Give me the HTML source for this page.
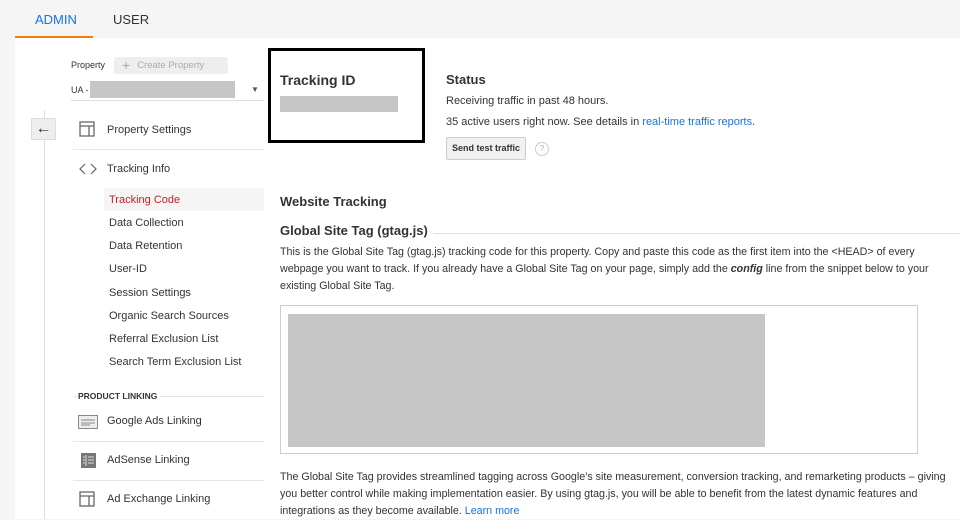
<!DOCTYPE html>
<html><head><style>
body{margin:0;width:960px;height:519px;overflow:hidden;background:#f5f5f5;font-family:"Liberation Sans",Arial,sans-serif;color:#333;position:relative}
.a{position:absolute;white-space:nowrap}
.gray{background:#c6c6c6}
.t{font-size:11px;color:#333}
.p{font-size:10.7px;color:#333}
.nav{font-size:11px;color:#333}
.hr{position:absolute;height:1px;background:#e6e6e6}
</style></head><body>
<div class="a" style="left:35px;top:12px;font-size:13px;color:#1a73e8">ADMIN</div>
<div class="a" style="left:113px;top:12px;font-size:13px;color:#333">USER</div>
<div class="a" style="left:15px;top:36px;width:78px;height:2px;background:#f57c00"></div>
<div class="a" style="left:15px;top:38px;width:945px;height:481px;background:#fff"></div>
<div class="a" style="left:44px;top:110px;width:1px;height:409px;background:#ddd"></div>
<div class="a" style="left:31px;top:118px;width:25px;height:22px;background:#eee;border:1px solid #ddd;box-sizing:border-box;font-size:16px;text-align:center;line-height:19px">&#8592;</div>
<div class="a" style="left:71px;top:60px;font-size:9px">Property</div>
<div class="a" style="left:114px;top:57px;width:114px;height:17px;background:#eee;border-radius:3px;font-size:9.5px;color:#aaa;line-height:17px"><span style="font-size:14px;margin:0 7px 0 8px;vertical-align:-2px">+</span>Create Property</div>
<div class="a" style="left:71px;top:85px;font-size:9px">UA -</div>
<div class="a gray" style="left:90px;top:81px;width:145px;height:17px"></div>
<div class="a" style="left:251px;top:85px;font-size:8px;color:#555">&#9660;</div>
<div class="hr" style="left:71px;top:100px;width:193px;background:#ddd"></div>
<svg class="a" style="left:79px;top:121px" width="16" height="16"><rect x="1" y="1" width="14" height="14" fill="none" stroke="#666" stroke-width="1.3"/><path d="M1 5H15M10 5V15" stroke="#666" stroke-width="1.3"/></svg>
<div class="a nav" style="left:107px;top:124px">Property Settings</div>
<div class="hr" style="left:73px;top:149px;width:191px"></div>
<svg class="a" style="left:79px;top:163px" width="18" height="12"><path d="M6 1L1 6L6 11M12 1L17 6L12 11" fill="none" stroke="#666" stroke-width="1.2"/></svg>
<div class="a nav" style="left:107px;top:163px">Tracking Info</div>
<div class="a" style="left:104px;top:188px;width:160px;height:23px;background:#f5f5f5"></div>
<div class="a nav" style="left:109px;top:194px;color:#c5221f">Tracking Code</div>
<div class="a nav" style="left:109px;top:217px">Data Collection</div>
<div class="a nav" style="left:109px;top:240px">Data Retention</div>
<div class="a nav" style="left:109px;top:263px">User-ID</div>
<div class="a nav" style="left:109px;top:287px">Session Settings</div>
<div class="a nav" style="left:109px;top:310px">Organic Search Sources</div>
<div class="a nav" style="left:109px;top:333px">Referral Exclusion List</div>
<div class="a nav" style="left:109px;top:356px">Search Term Exclusion List</div>
<div class="hr" style="left:73px;top:396px;width:191px"></div>
<div class="a" style="left:78px;top:391px;font-size:8.5px;font-weight:bold;background:#fff;padding-right:3px">PRODUCT LINKING</div>
<svg class="a" style="left:78px;top:415px" width="20" height="14"><rect x=".5" y=".5" width="19" height="13" fill="#eee" stroke="#888"/><path d="M3 5H17M3 8H17M3 10H12" stroke="#888"/></svg>
<div class="a nav" style="left:107px;top:415px">Google Ads Linking</div>
<div class="hr" style="left:73px;top:441px;width:191px"></div>
<svg class="a" style="left:81px;top:453px" width="15" height="15"><rect width="15" height="15" fill="#777"/><path d="M5 2V13M7 4H13M7 7H13M7 10H13M2 4H4M2 7H4M2 10H4" stroke="#ddd"/></svg>
<div class="a nav" style="left:107px;top:454px">AdSense Linking</div>
<div class="hr" style="left:73px;top:480px;width:191px"></div>
<svg class="a" style="left:79px;top:491px" width="16" height="16"><rect x="1" y="1" width="14" height="14" fill="none" stroke="#666" stroke-width="1.3"/><path d="M1 5H15M10 5V15" stroke="#666" stroke-width="1.3"/></svg>
<div class="a nav" style="left:107px;top:493px">Ad Exchange Linking</div>

<div class="a" style="left:268px;top:48px;width:157px;height:95px;border:3px solid #000;box-sizing:border-box"></div>
<div class="a" style="left:280px;top:72px;font-size:14px;font-weight:bold">Tracking ID</div>
<div class="a gray" style="left:280px;top:96px;width:118px;height:16px"></div>
<div class="a" style="left:446px;top:72px;font-size:13px;font-weight:bold">Status</div>
<div class="a t" style="left:446px;top:95px">Receiving traffic in past 48 hours.</div>
<div class="a t" style="left:446px;top:116px">35 active users right now. See details in <span style="color:#1a73e8">real-time traffic reports</span>.</div>
<div class="a" style="left:446px;top:137px;width:80px;height:23px;background:#f1f1f1;border:1px solid #ccc;box-sizing:border-box;font-size:9px;font-weight:bold;text-align:center;line-height:21px;border-radius:2px">Send test traffic</div>
<div class="a" style="left:535px;top:142px;width:12px;height:12px;border:1px solid #ccc;border-radius:50%;font-size:8px;color:#aaa;text-align:center;line-height:12px">?</div>
<div class="a" style="left:280px;top:194px;font-size:13px;font-weight:bold">Website Tracking</div>
<div class="hr" style="left:280px;top:233px;width:680px;background:#e0e0e0"></div>
<div class="a" style="left:280px;top:223px;font-size:13px;font-weight:bold;background:#fff;padding-right:5px">Global Site Tag (gtag.js)</div>
<div class="a p" style="left:280px;top:244px;line-height:17px;white-space:normal;width:660px">This is the Global Site Tag (gtag.js) tracking code for this property. Copy and paste this code as the first item into the &lt;HEAD&gt; of every webpage you want to track. If you already have a Global Site Tag on your page, simply add the <b><i>config</i></b> line from the snippet below to your existing Global Site Tag.</div>
<div class="a" style="left:280px;top:305px;width:638px;height:149px;border:1px solid #ccc;box-sizing:border-box"></div>
<div class="a gray" style="left:288px;top:314px;width:477px;height:133px"></div>
<div class="a p" style="left:280px;top:469px;line-height:17px;white-space:normal;width:678px">The Global Site Tag provides streamlined tagging across Google’s site measurement, conversion tracking, and remarketing products – giving you better control while making implementation easier. By using gtag.js, you will be able to benefit from the latest dynamic features and integrations as they become available. <span style="color:#1a73e8">Learn more</span></div>
</body></html>
